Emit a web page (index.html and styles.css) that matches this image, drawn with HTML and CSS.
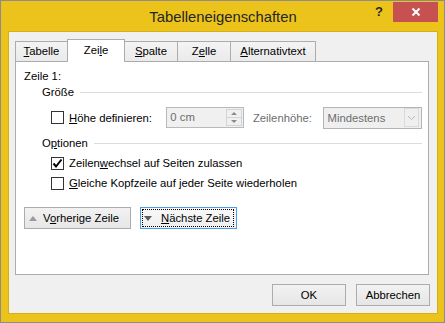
FILE: index.html
```html
<!DOCTYPE html>
<html lang="de">
<head>
  <meta charset="UTF-8">
  <title>Tabelleneigenschaften</title>
  <link rel="stylesheet" href="styles.css">
</head>
<body>

<div class="window">
  <div class="titlebar">
    <span></span>
    <span class="title">Tabelleneigenschaften</span>
    <div class="caption-buttons">
      <span class="help">?</span>
      <span class="close">
        <svg width="10" height="10" viewBox="0 0 10 10"><path d="M1.5 1.5 L8.5 8.5 M8.5 1.5 L1.5 8.5" stroke="#fff" stroke-width="2"/></svg>
      </span>
    </div>
  </div>

  <div class="client">
    <div class="tabs">
      <div class="tab tab-tabelle"><u>T</u>abelle</div>
      <div class="tab tab-zeile active">Zei<u>l</u>e</div>
      <div class="tab tab-spalte"><u>S</u>palte</div>
      <div class="tab tab-zelle">Z<u>e</u>lle</div>
      <div class="tab tab-alt"><u>A</u>lternativtext</div>
    </div>

    <div class="panel">
      <div class="row-title">Zeile 1:</div>

      <div class="group-head"><span>Größe</span></div>
      <div class="field-row">
        <label class="check check-wide"><span class="box"></span><span><u>H</u>öhe definieren:</span></label>
        <div class="spin-input">
          <span class="spin-text">0 cm</span>
          <span class="spinner">
            <span class="spin-up"></span>
            <span class="spin-down"></span>
          </span>
        </div>
        <span class="disabled-label">Zeilenhöhe:</span>
        <div class="select">
          <span>Mindestens</span>
          <span class="select-arrow">
            <svg width="9" height="6" viewBox="0 0 9 6"><path d="M1 1 L4.5 4.5 L8 1" fill="none" stroke="#b8b8b8" stroke-width="1"/></svg>
          </span>
        </div>
      </div>

      <div class="group-head group-options"><span>O<u>p</u>tionen</span></div>
      <label class="check check-row"><span class="box">
        <svg width="11" height="11" viewBox="0 0 11 11"><path d="M1.5 5.5 L4 8.5 L9.5 1.5" fill="none" stroke="#000" stroke-width="2"/></svg>
      </span><span>Zeilen<u>w</u>echsel auf Seiten zulassen</span></label>
      <label class="check check-row"><span class="box"></span><span><u>G</u>leiche Kopfzeile auf jeder Seite wiederholen</span></label>

      <div class="nav">
        <button class="btn btn-prev"><span class="tri-up"></span><span>V<u>o</u>rherige Zeile</span></button>
        <button class="btn btn-next"><span class="tri-down"></span><span><u>N</u>ächste Zeile</span></button>
      </div>
    </div>

    <div class="footer">
      <button class="btn btn-dialog">OK</button>
      <button class="btn btn-dialog">Abbrechen</button>
    </div>
  </div>
</div>

</body>
</html>
```

FILE: styles.css
```css
* {margin:0;padding:0;box-sizing:border-box;}
body {
  background: #fff;
  font-family: "Liberation Sans", Arial, sans-serif;
  font-size: 11.3px;
  color: #000;
}
u { text-decoration: underline; text-underline-offset: 1px; }

.window {
  width: 445px;
  height: 323px;
  border: 1px solid #8c8c8c;
  background: #ecc31b;
  padding: 0 6px 8px 7px;
}

.titlebar {
  height: 30px;
  display: grid;
  grid-template-columns: 1fr auto 1fr;
}
.title {
  align-self: center;
  font-size: 14.8px;
  color: #262626;
  margin-top: 1px;
}
.caption-buttons {
  justify-self: end;
  display: flex;
  padding-top: 1px;
}
.help {
  width: 28px;
  height: 20px;
  text-align: center;
  font-weight: bold;
  font-size: 13px;
  line-height: 19px;
  color: #2a2a2a;
}
.close {
  width: 45px;
  height: 20px;
  background: #c75050;
  display: flex;
  justify-content: center;
  align-items: center;
}

.client {
  height: 283px;
  background: #f0f0f0;
  border: 1px solid #d6af17;
  padding: 7px 8px 0 6px;
}

.tabs {
  display: flex;
  align-items: flex-end;
  height: 22px;
  position: relative;
  z-index: 1;
}
.tab {
  height: 20px;
  border: 1px solid #acacac;
  border-bottom: none;
  background: linear-gradient(#f4f4f4, #eaeaea);
  text-align: center;
  line-height: 19px;
  margin-left: -1px;
}
.tab-tabelle { width: 53px; margin-left: 0; }
.tab-zeile { width: 58px; }
.tab-spalte { width: 54px; }
.tab-zelle { width: 54px; }
.tab-alt { width: 86px; }
.tab.active {
  height: 23px;
  margin-bottom: -1px;
  background: #fff;
  line-height: 21px;
  position: relative;
  z-index: 2;
}

.panel {
  height: 214px;
  background: #fff;
  border: 1px solid #acacac;
  padding: 7px 6px 0 8px;
}
.row-title {
  height: 15px;
  line-height: 15px;
}
.group-head {
  height: 16px;
  margin-left: 18px;
  display: flex;
  align-items: center;
  gap: 6px;
}
.group-head::after {
  content: "";
  flex: 1;
  border-top: 1px solid #dcdcdc;
  margin-top: 1px;
}
.group-options { margin-top: 7px; }

.field-row {
  margin-top: 7px;
  margin-left: 27px;
  height: 21px;
  display: flex;
  align-items: center;
}
.check {
  display: flex;
  align-items: center;
  gap: 5px;
}
.check-wide { width: 116px; }
.check-row {
  margin-top: 4px;
  margin-left: 27px;
  height: 16px;
}
.box {
  width: 13px;
  height: 13px;
  border: 1px solid #333;
  background: #fff;
  display: flex;
  justify-content: center;
  align-items: center;
}

.spin-input {
  width: 78px;
  height: 21px;
  border: 1px solid #b9b9b9;
  background: #f0f0f0;
  display: flex;
  align-items: stretch;
  color: #6d6d6d;
}
.spin-text {
  flex: 1;
  padding-left: 3px;
  line-height: 19px;
}
.spinner {
  width: 16px;
  margin: 1px 1px 1px 0;
  display: flex;
  flex-direction: column;
  border: 1px solid #d4d4d4;
}
.spin-up, .spin-down {
  flex: 1;
  display: flex;
  justify-content: center;
  align-items: center;
}
.spin-up { border-bottom: 1px solid #d4d4d4; }
.spin-up::before {
  content: "";
  border: 3px solid transparent;
  border-bottom: 3px solid #8a8a8a;
  border-top: none;
}
.spin-down::before {
  content: "";
  border: 3px solid transparent;
  border-top: 3px solid #8a8a8a;
  border-bottom: none;
}

.disabled-label {
  color: #6d6d6d;
  margin-left: 9px;
  width: 70px;
}
.select {
  width: 100px;
  height: 22px;
  border: 1px solid #b4b4b4;
  background: #efefef;
  display: flex;
  align-items: center;
  justify-content: space-between;
  padding-left: 4px;
  color: #6d6d6d;
}
.select-arrow {
  width: 15px;
  height: 19px;
  margin-right: 2px;
  border: 1px solid #dadada;
  display: flex;
  justify-content: center;
  align-items: center;
}

.nav {
  margin-top: 16px;
  display: flex;
  gap: 9px;
}
.btn {
  height: 22px;
  border: 1px solid #acacac;
  background: linear-gradient(#f2f2f2, #e6e6e6);
  font-family: inherit;
  font-size: 11.3px;
  color: #000;
  display: flex;
  align-items: center;
  justify-content: center;
  white-space: nowrap;
}
.btn-prev {
  width: 107px;
  justify-content: flex-start;
  padding-left: 4px;
  gap: 6px;
}
.btn-next {
  width: 97px;
  justify-content: flex-start;
  padding-left: 3px;
  gap: 9px;
  border-color: #4a9de6;
  background: linear-gradient(#f8f8f8, #efefef);
  position: relative;
}
.btn-next::after {
  content: "";
  position: absolute;
  inset: 1px 2px 1px 1px;
  border: 1px dotted #000;
}
.tri-up {
  width: 0;
  height: 0;
  border-left: 4.5px solid transparent;
  border-right: 4.5px solid transparent;
  border-bottom: 5px solid #9a9a9a;
}
.tri-down {
  width: 0;
  height: 0;
  border-left: 4.5px solid transparent;
  border-right: 4.5px solid transparent;
  border-top: 5px solid #5c5c5c;
}

.footer {
  margin-top: 9px;
  margin-right: -1px;
  display: flex;
  justify-content: flex-end;
  gap: 10px;
}
.btn-dialog {
  width: 74px;
}
```
